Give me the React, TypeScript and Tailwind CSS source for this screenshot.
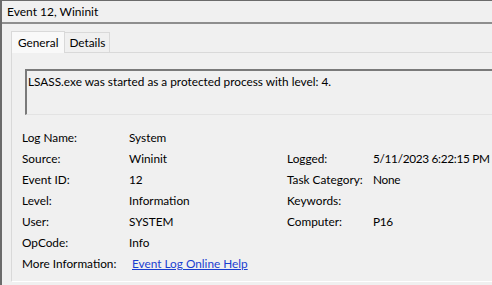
const font = { fontFamily: '"Lato", "Noto Sans", sans-serif' };

type Row = { label: string; value?: string; link?: boolean };

const left: Row[] = [
  { label: 'Log Name:', value: 'System' },
  { label: 'Source:', value: 'Wininit' },
  { label: 'Event ID:', value: '12' },
  { label: 'Level:', value: 'Information' },
  { label: 'User:', value: 'SYSTEM' },
  { label: 'OpCode:', value: 'Info' },
  { label: 'More Information:', value: 'Event Log Online Help', link: true },
];

const right: (Row | null)[] = [
  null,
  { label: 'Logged:', value: '5/11/2023 6:22:15 PM' },
  { label: 'Task Category:', value: 'None' },
  { label: 'Keywords:' },
  { label: 'Computer:', value: 'P16' },
  null,
  null,
];

export default function App() {
  return (
    <div
      className="w-[492px] h-[285px] overflow-hidden bg-[#f0f0f0] border-t border-l-2 border-[#6b6b6b] text-[11.8px] text-black"
      style={font}
    >
      <div className="h-[21px] flex items-center pl-[5px] text-[12px]">Event 12, Wininit</div>
      <div className="h-[2px] bg-[#8e8e8e]" />

      <div className="pl-[9px] pt-[6px] w-[520px]">
        <div className="flex items-end">
          <div className="h-[22px] px-[6px] flex items-center bg-[#f9f9f9] border border-b-0 border-[#d9d9d9] relative top-[1px] z-10">
            General
          </div>
          <div className="h-[20px] px-[4px] flex items-center bg-[#f0f0f0] border border-l-0 border-b-0 border-[#d9d9d9]">
            Details
          </div>
        </div>

        <div className="border border-[#d9d9d9] border-b-white bg-[#f0f0f0] pt-[16px] pb-[7px]">
          <div className="ml-[13px] h-[46px] border-t-2 border-l-2 border-t-[#7a7a7a] border-l-[#7a7a7a] border-b border-b-[#e3e3e3] px-[1px] pt-[2px]">
            LSASS.exe was started as a protected process with level: 4.
          </div>

          <div className="mt-[12px] pl-[10px] grid grid-cols-[107px_158px_86px_1fr] auto-rows-[21px] items-center">
            {left.map((l, i) => {
              const r = right[i];
              return (
                <div key={l.label} className="contents">
                  <div>{l.label}</div>
                  <div>
                    {l.link ? (
                      <span className="text-[#1a3ed0] underline pl-[3px]">{l.value}</span>
                    ) : (
                      l.value
                    )}
                  </div>
                  <div>{r ? r.label : ''}</div>
                  <div className="tracking-[-0.3px]">{r ? r.value : ''}</div>
                </div>
              );
            })}
          </div>
        </div>
      </div>
    </div>
  );
}
